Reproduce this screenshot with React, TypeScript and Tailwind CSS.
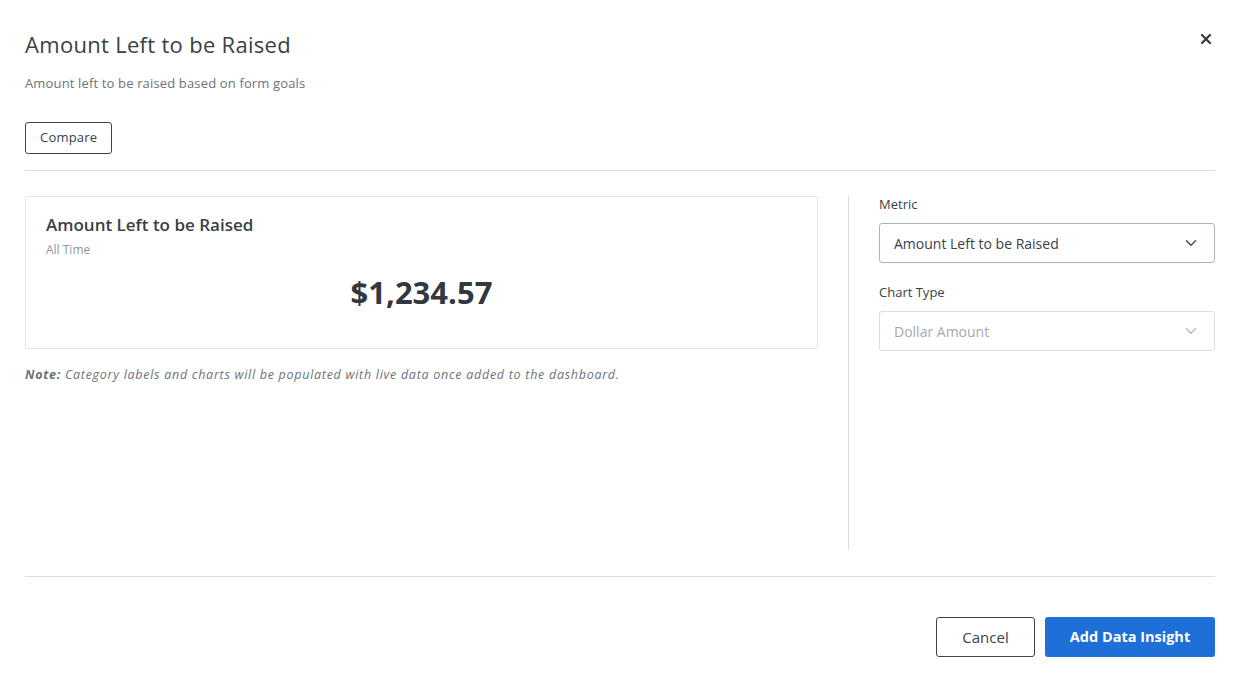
import { ChevronDown, X } from 'lucide-react';

const font = { fontFamily: '"Open Sans", Lato, Arial, sans-serif' };

function Select({ value, disabled }: { value: string; disabled?: boolean }) {
  return (
    <div
      className={
        'flex h-[40px] items-center justify-between rounded-[3px] border bg-white pl-[14px] pr-[14px] text-[14px] ' +
        (disabled ? 'border-[#dcdfe2] text-[#a4a9ae]' : 'border-[#a9b5b6] text-[#3c4147]')
      }
    >
      <span>{value}</span>
      <ChevronDown
        size={18}
        strokeWidth={2}
        className={disabled ? 'text-[#b8bcc0]' : 'text-[#4a4f55]'}
      />
    </div>
  );
}

export default function App() {
  return (
    <div className="min-h-screen bg-white text-[#3a3f45]" style={font}>
      <div className="pl-[25px] pr-[26px] pt-[30px]">
        <div className="flex items-start justify-between">
          <h1 className="text-[22px] leading-[28px] tracking-[0.3px] text-[#3a3f45]">Amount Left to be Raised</h1>
          <button className="mr-[1px] mt-[1px] text-[#3a3f45]">
            <X size={16} strokeWidth={3.5} />
          </button>
        </div>
        <p className="mt-[16px] text-[13px] leading-[18px] tracking-[0.15px] text-[#6c7379]">
          Amount left to be raised based on form goals
        </p>
        <button className="mt-[30px] h-[32px] rounded-[3px] border border-[#3f4449] px-[14px] text-[13px] tracking-[0.2px] text-[#3a3f45]">
          Compare
        </button>
        <div className="mt-[16px] h-px bg-[#d9dbdd]" />

        <div className="flex pt-[25px]">
          <div className="w-[793px]">
            <div className="h-[153px] rounded-[2px] border border-[#e3e5e7] px-[20px] pt-[17px]">
              <div className="text-[17px] font-semibold leading-[22px] text-[#3a3f45]">Amount Left to be Raised</div>
              <div className="mt-[6px] text-[12px] leading-[16px] text-[#8f969c]">All Time</div>
              <div className="mt-[14px] text-center text-[31px] font-bold leading-[40px] text-[#33383e]">
                $1,234.57
              </div>
            </div>
            <p className="mt-[18px] text-[12.5px] italic leading-[16px] tracking-[0.72px] text-[#6c7379]">
              <span className="font-bold">Note:</span> Category labels and charts will be populated with live data
              once added to the dashboard.
            </p>
          </div>
          <div className="ml-[30px] h-[354px] w-px bg-[#d9dbdd]" />
          <div className="ml-[30px] flex-1">
            <div className="text-[13px] leading-[16px] text-[#3a3f45]">Metric</div>
            <div className="mt-[11px]">
              <Select value="Amount Left to be Raised" />
            </div>
            <div className="mt-[21px] text-[13px] leading-[16px] text-[#3a3f45]">Chart Type</div>
            <div className="mt-[11px]">
              <Select value="Dollar Amount" disabled />
            </div>
          </div>
        </div>

        <div className="mt-[26px] h-px bg-[#d9dbdd]" />
        <div className="flex justify-end gap-[10px] pt-[40px]">
          <button className="h-[40px] w-[99px] rounded-[3px] border border-[#3f4449] text-[15px] text-[#3a3f45]">
            Cancel
          </button>
          <button className="h-[40px] w-[170px] rounded-[3px] bg-[#1f6fd9] text-[14.5px] font-bold text-white">
            Add Data Insight
          </button>
        </div>
      </div>
    </div>
  );
}
